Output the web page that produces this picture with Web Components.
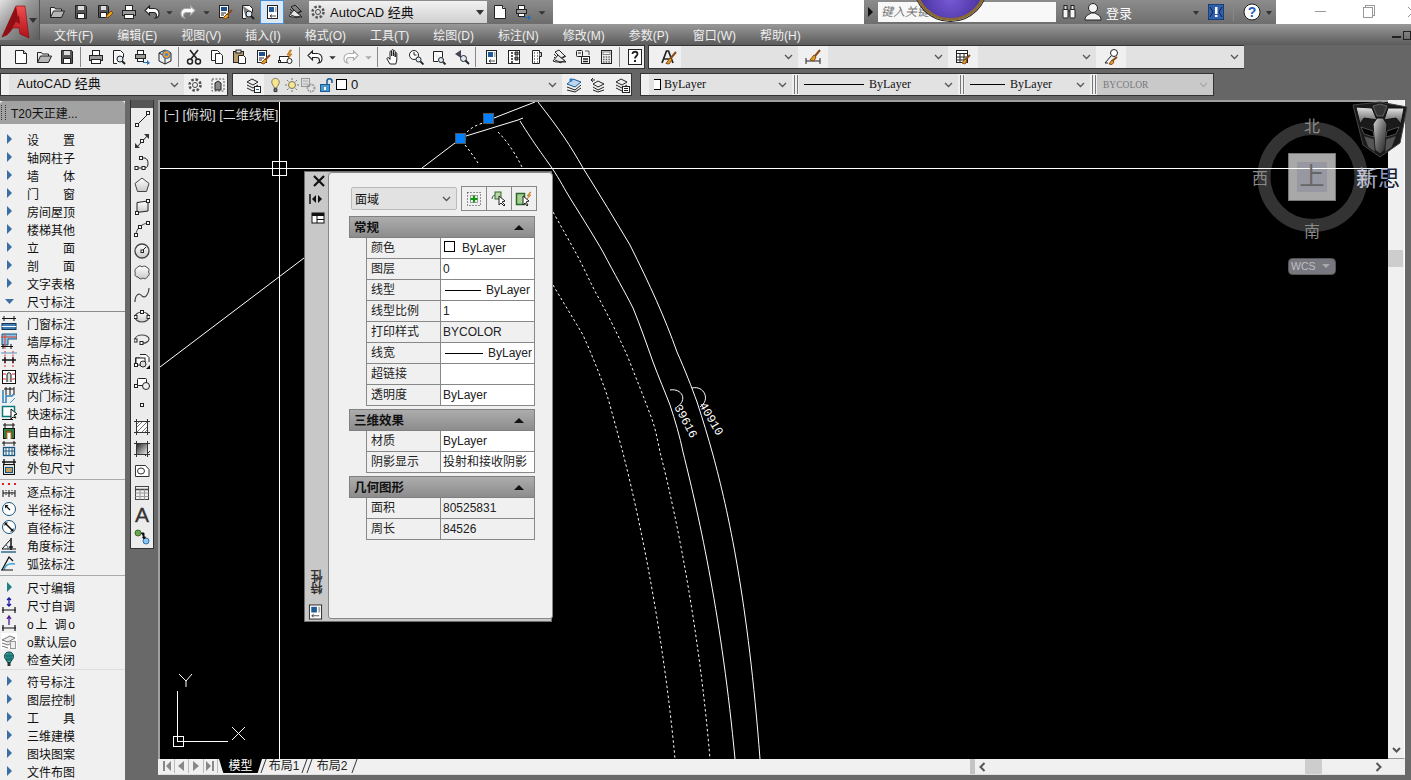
<!DOCTYPE html>
<html lang="zh">
<head>
<meta charset="utf-8">
<title>AutoCAD</title>
<style>
html, body { margin: 0; height: 100%; overflow: hidden; }
body {
    background: #696969;
    font: 12px "Liberation Sans", "Noto Sans CJK SC", sans-serif;
    color: #111;
    display: flex;
    flex-direction: column;
}
.serif { font: 12px "Liberation Serif", "Noto Sans CJK SC", serif; }
.line { display: inline-block; border-top: 1px solid #000; vertical-align: middle; }
.swatch { display: inline-block; width: 9px; height: 9px; border: 1px solid #000; background: #fff; }
</style>
</head>
<body>

<cad-titlebar></cad-titlebar>
<cad-menubar></cad-menubar>

<cad-toolrow style="height:28px">
    <cad-toolbar style="width:645px">
        <cad-icon name="new"></cad-icon><cad-icon name="open"></cad-icon><cad-icon name="save"></cad-icon><cad-sep></cad-sep>
        <cad-icon name="print"></cad-icon><cad-icon name="preview"></cad-icon><cad-icon name="publish"></cad-icon><cad-icon name="dwf"></cad-icon><cad-sep></cad-sep>
        <cad-icon name="cut"></cad-icon><cad-icon name="copy"></cad-icon><cad-icon name="paste"></cad-icon><cad-icon name="match"></cad-icon><cad-icon name="bblock"></cad-icon><cad-sep></cad-sep>
        <cad-icon name="undo"></cad-icon><cad-icon name="caret" w="13"></cad-icon><cad-icon name="redo"></cad-icon><cad-icon name="caretg" w="13"></cad-icon><cad-sep></cad-sep>
        <cad-icon name="pan"></cad-icon><cad-icon name="zoomrt"></cad-icon><cad-icon name="zoomwin"></cad-icon><cad-icon name="zoomprev"></cad-icon><cad-sep></cad-sep>
        <cad-icon name="props"></cad-icon><cad-icon name="center"></cad-icon><cad-icon name="tools"></cad-icon><cad-icon name="sheets"></cad-icon><cad-icon name="markup"></cad-icon><cad-icon name="calc"></cad-icon><cad-sep></cad-sep>
        <cad-icon name="help"></cad-icon>
    </cad-toolbar>
    <cad-toolbar style="width:596px;margin-left:3px">
        <cad-icon name="textstyle" w="24"></cad-icon><cad-combo style="width:117px"></cad-combo>
        <cad-icon name="dimstyle" w="30"></cad-icon><cad-combo style="width:120px"></cad-combo>
        <cad-icon name="tablestyle" w="30"></cad-icon><cad-combo style="width:118px"></cad-combo>
        <cad-icon name="mleader" w="30"></cad-icon><cad-combo style="width:118px"></cad-combo>
    </cad-toolbar>
</cad-toolrow>

<cad-toolrow style="height:27px">
    <cad-toolbar style="width:228px">
        <cad-combo style="width:175px;font-size:13px"><span style="margin-left:3px;line-height:19px;margin-top:-2px">AutoCAD 经典</span></cad-combo>
        <cad-icon name="gear" w="22"></cad-icon><cad-icon name="hatchbox" w="23"></cad-icon>
    </cad-toolbar>
    <cad-toolbar style="width:400px;margin-left:4px">
        <cad-icon name="layers" w="23"></cad-icon>
        <cad-combo style="width:298px">
            <cad-icon name="bulb" w="15" style="margin-left:-1px"></cad-icon><cad-icon name="sun" w="17"></cad-icon><cad-icon name="freeze" w="16"></cad-icon><cad-icon name="lock" w="19"></cad-icon><span class="swatch" style="margin:0 4px 0 1px"></span><span style="font-size:13px">0</span>
        </cad-combo>
        <cad-icon name="layerstate" w="24"></cad-icon><cad-icon name="layerprev" w="24"></cad-icon><cad-icon name="layerset" w="23"></cad-icon>
    </cad-toolbar>
    <cad-toolbar style="width:574px;margin-left:8px">
        <cad-combo style="width:143px"><span class="swatch" style="margin:0 3px 0 -4px"></span><span class="serif">ByLayer</span></cad-combo>
        <cad-grip></cad-grip>
        <cad-combo style="width:159px"><span class="line" style="width:60px;margin-right:5px"></span><span class="serif">ByLayer</span></cad-combo>
        <cad-grip></cad-grip>
        <cad-combo style="width:125px"><span class="line" style="width:35px;margin-right:5px"></span><span class="serif">ByLayer</span></cad-combo>
        <cad-grip></cad-grip>
        <cad-combo style="width:116px;background:#c9c9c9" disabled><span class="serif" style="color:#777;font-size:9.5px;margin-left:1px">BYCOLOR</span></cad-combo>
    </cad-toolbar>
</cad-toolrow>

<cad-main>
    <t20-panel>
        <t20-group rule="#8c8c8c">
            <t20-item arrow label="设 置"></t20-item>
            <t20-item arrow label="轴网柱子"></t20-item>
            <t20-item arrow label="墙 体"></t20-item>
            <t20-item arrow label="门 窗"></t20-item>
            <t20-item arrow label="房间屋顶"></t20-item>
            <t20-item arrow label="楼梯其他"></t20-item>
            <t20-item arrow label="立 面"></t20-item>
            <t20-item arrow label="剖 面"></t20-item>
            <t20-item arrow label="文字表格"></t20-item>
            <t20-item arrow="down" label="尺寸标注"></t20-item>
        </t20-group>
        <t20-group rule="#aaa" wide>
            <t20-item icon="t_door" label="门窗标注"></t20-item>
            <t20-item icon="t_wall" label="墙厚标注"></t20-item>
            <t20-item icon="t_two" label="两点标注"></t20-item>
            <t20-item icon="t_double" label="双线标注"></t20-item>
            <t20-item icon="t_inner" label="内门标注"></t20-item>
            <t20-item icon="t_quick" label="快速标注"></t20-item>
            <t20-item icon="t_free" label="自由标注"></t20-item>
            <t20-item icon="t_stair" label="楼梯标注"></t20-item>
            <t20-item icon="t_outer" label="外包尺寸"></t20-item>
        </t20-group>
        <t20-group rule="#aaa" wide>
            <t20-item icon="t_point" label="逐点标注"></t20-item>
            <t20-item icon="t_radius" label="半径标注"></t20-item>
            <t20-item icon="t_diam" label="直径标注"></t20-item>
            <t20-item icon="t_angle" label="角度标注"></t20-item>
            <t20-item icon="t_arc" label="弧弦标注"></t20-item>
        </t20-group>
        <t20-group rule="#ddd">
            <t20-item arrow="teal" label="尺寸编辑"></t20-item>
            <t20-item icon="t_adj" label="尺寸自调"></t20-item>
            <t20-item icon="t_up" label="o上 调o"></t20-item>
            <t20-item icon="t_layer" label="o默认层o"></t20-item>
            <t20-item icon="t_check" label="检查关闭"></t20-item>
        </t20-group>
        <t20-group>
            <t20-item arrow label="符号标注"></t20-item>
            <t20-item arrow label="图层控制"></t20-item>
            <t20-item arrow label="工 具"></t20-item>
            <t20-item arrow label="三维建模"></t20-item>
            <t20-item arrow label="图块图案"></t20-item>
            <t20-item arrow label="文件布图"></t20-item>
        </t20-group>
    </t20-panel>

    <draw-toolbar></draw-toolbar>

    <cad-viewport>
        <view-cube></view-cube>
        <prop-palette>
            <prop-section title="常规">
                <prop-row label="颜色"><span class="swatch" style="margin:0 7px 0 1px"></span>ByLayer</prop-row>
                <prop-row label="图层">0</prop-row>
                <prop-row label="线型"><span class="line" style="width:36px;margin:0 5px 0 2px"></span>ByLayer</prop-row>
                <prop-row label="线型比例">1</prop-row>
                <prop-row label="打印样式" readonly>BYCOLOR</prop-row>
                <prop-row label="线宽"><span class="line" style="width:38px;margin:0 5px 0 2px"></span>ByLayer</prop-row>
                <prop-row label="超链接"></prop-row>
                <prop-row label="透明度">ByLayer</prop-row>
            </prop-section>
            <prop-section title="三维效果">
                <prop-row label="材质">ByLayer</prop-row>
                <prop-row label="阴影显示">投射和接收阴影</prop-row>
            </prop-section>
            <prop-section title="几何图形">
                <prop-row label="面积" readonly>80525831</prop-row>
                <prop-row label="周长" readonly>84526</prop-row>
            </prop-section>
        </prop-palette>
    </cad-viewport>
</cad-main>

<script>
const BRUSH = 'stroke="#8a4a18"';
const ICONS = {
    new: '<path d="M2.5 1.5h8l3 3v10h-11z" fill="#fff"/><path d="M10.5 1.5v3h3" fill="#ccc"/>',
    open: '<path d="M1.5 13.5v-10h4l1 1.5h6v2" fill="#eee"/><path d="M1.5 13.5l3-6.5h11l-3 6.5z" fill="#b5b5b5"/>',
    save: '<path d="M2.5 1.5h10l1 1v12h-11z" fill="#555"/><rect x="5" y="2" width="6" height="4" fill="#ddd" stroke="none"/><rect x="4.5" y="9.5" width="7" height="5" fill="#fff"/>',
    saveas: '<path d="M1.5 1.5h9l1 1v11h-10z" fill="#555"/><rect x="4" y="2" width="5" height="4" fill="#ddd" stroke="none"/><rect x="3.5" y="8.5" width="6" height="5" fill="#fff"/><path d="M9 14l1-3 4-4 2 2-4 4z" fill="#e8a020" stroke="#7a4a10"/>',
    print: '<rect x="4.5" y="1.5" width="7" height="5" fill="#fff"/><rect x="1.5" y="6.5" width="13" height="5" fill="#999"/><rect x="3.5" y="10.5" width="9" height="4" fill="#fff"/>',
    preview: '<path d="M2.5 1.5h7l3 3v4M6 14.5H2.5v-13" fill="#fff"/><circle cx="9" cy="10" r="3" fill="#dfeaf5"/><path d="M11 12l3 3" stroke-width="2"/>',
    publish: '<rect x="3.5" y="1.5" width="6" height="4" fill="#fff"/><rect x="1.5" y="5.5" width="10" height="4" fill="#999"/><rect x="3.5" y="9.5" width="6" height="3" fill="#fff"/><path d="M9 13h4v-2l3 3-3 2v-2H9z" fill="#1c70c0" stroke="none"/>',
    dwf: '<path d="M8 1l6 3v8l-6 3-6-3V4z" fill="#eee"/><path d="M2 4l6 3 6-3M8 7v8"/><circle cx="9.5" cy="5.5" r="4" fill="#f29a2e" stroke="#1c70c0"/><circle cx="9.5" cy="5.5" r="1.6" fill="#3a8ad0" stroke="none"/>',
    cut: '<path d="M4 1l7 9M12 1l-7 9" stroke-width="1.6"/><circle cx="4" cy="12.5" r="2.5" stroke-width="1.5"/><circle cx="12" cy="12.5" r="2.5" stroke-width="1.5"/>',
    copy: '<path d="M2.5 1.5h6l2 2v8h-8z" fill="#fff"/><path d="M6.5 4.5h5l2 2v8h-7z" fill="#fff"/>',
    paste: '<rect x="1.5" y="2.5" width="10" height="11" fill="#b89b6a"/><rect x="4" y="1" width="5" height="3" fill="#ddd"/><path d="M6.5 6.5h5l2 2v6h-7z" fill="#fff"/>',
    match: `<rect x="2.5" y="1.5" width="9" height="12" fill="#fff"/><rect x="4" y="3" width="6" height="4" fill="#1f4f8f" stroke="none"/><path d="M4 9h5M4 11h3"/><path d="M15 6l-5 5" ${BRUSH} stroke-width="2"/><path d="M10 10l2 2-3 3-3-1z" fill="#e0a020" ${BRUSH}/>`,
    bblock: '<rect x="1.5" y="7.5" width="9" height="6" fill="#fff"/><circle cx="11.5" cy="12" r="2.5" fill="#fff"/><rect x=".5" y="11.5" width="2" height="2" fill="#fff"/><path d="M12 1l-3 5h2.500l-1.500 4 4-5h-2.500l2-4z" fill="#f09a20" stroke="#a05a10" stroke-width=".6"/>',
    undo: '<path d="M5.5 2L1 6.500 5.500 11V8.500h4c2.500 0 3 1.500 3 3 0 1-.5 2-1 2.500 2.500-.5 3.500-2.500 3.500-4.500 0-3-2-5-5-5h-4.500z" fill="#fff" stroke-width="1.1"/>',
    redo: '<path d="M10.5 2L15 6.500 10.500 11V8.500h-4c-2.500 0-3 1.500-3 3 0 1 .5 2 1 2.500C2 13.500 1 11.500 1 9.500c0-3 2-5 5-5h4.500z" fill="#fff" stroke="#aaa" stroke-width="1.1"/>',
    caret: '<path d="M4 7h8l-4 4z" fill="#333" stroke="none"/>',
    caretg: '<path d="M4 7h8l-4 4z" fill="#aaa" stroke="none"/>',
    pan: '<path d="M5 15l-3-5c-.5-1 1-2 2-1l1 1.500V3c0-1.300 1.700-1.300 1.700 0v4-5.500c0-1.300 1.800-1.300 1.800 0V7V2.500c0-1.300 1.700-1.300 1.700 0V8V4.500c0-1.200 1.600-1.200 1.600 0V11l-1 4z" fill="#fff"/>',
    zoomrt: '<circle cx="6" cy="6" r="4.5" fill="#fff"/><path d="M6 3v3h2.500"/><circle cx="10.5" cy="10.5" r="2.500" fill="#dfeaf5"/><path d="M12.5 12.500l3 3" stroke-width="1.8"/>',
    zoomwin: '<path d="M2.5 2.500h9v6M7 12.500H2.500v-10" fill="#fff"/><circle cx="10" cy="11" r="2.5" fill="#dfeaf5"/><path d="M12 13l2.500 2.500" stroke-width="1.8"/>',
    zoomprev: '<path d="M7 1l-6 4 6 4z" fill="#445" stroke="none"/><circle cx="9.5" cy="9.5" r="3" fill="#dfeaf5"/><path d="M11.5 11.500l3.500 3.500" stroke-width="1.8"/>',
    props: '<rect x="3.5" y="1.5" width="10" height="13" fill="#fff"/><rect x="5" y="3" width="5" height="5" fill="#1f5a9a" stroke="none"/><rect x="11" y="3" width="1.5" height="5" fill="#aaa" stroke="none"/><path d="M6 12h6M6 12l2-1.500M6 12l2 1.500" stroke-width=".8"/>',
    center: '<rect x="2.5" y="1.5" width="11" height="13" fill="#fff"/><path d="M5 4h2M5 7h2M5 10h2M5 13h2" stroke-width="1.5"/><path d="M9 3h3v3H9zM9 8h3v3H9z" fill="#778"/>',
    tools: '<path d="M3.5 1.500h7v13h-7z" fill="#fff"/><path d="M10.5 3.500h2v4h-2" fill="#ccc"/><path d="M5 4h1M8 4h1M5 7h1M8 7h1M5 10h1M8 10h1M5 13h1M8 13h1" stroke-width="1.5" stroke="#666"/>',
    sheets: '<path d="M7 1l6 6-4 2-6-6zM2 5l6 6M2 8l6 6 5-3M6 12l8-5"/><path d="M1 12l5-6 8 7H4z" fill="#e8e8e8"/><path d="M3 11l5 2 5-1" stroke="#333"/>',
    markup: '<rect x="1.5" y="1.5" width="6" height="6" rx="1" fill="#eee"/><path d="M3 4h3"/><rect x="6.5" y="7.5" width="8" height="7" fill="#fff"/><path d="M8 10h5M8 12.500h5" stroke-width="1.5"/><path d="M10 2h4v4" stroke="#555"/>',
    calc: '<rect x="3.5" y="1.5" width="10" height="13" fill="#eee"/><rect x="5" y="3" width="7" height="2.5" fill="#fff" stroke="#555" stroke-width=".7"/><path d="M5 8h7M5 10.500h7M5 13h7" stroke="#666" stroke-dasharray="1.5 1.2" stroke-width="1.4"/>',
    help: '<rect x="1.5" y=".5" width="13" height="15" fill="#fff"/><path d="M5.5 5c0-3 5-3 5 0 0 2-2.500 2-2.500 4.500" stroke-width="1.8"/><rect x="7" y="11" width="2" height="2" fill="#222" stroke="none"/>',
    textstyle: `<path d="M1 14L5.500 2h2L12 14M3 10h7" stroke-width="1.7"/><path d="M15 3L9 10" ${BRUSH} stroke-width="2"/><path d="M9 9l2 2-3 4-3-.5z" fill="#e0a020" ${BRUSH}/>`,
    dimstyle: `<path d="M1 9v6M15 9v6M1 12h14"/><path d="M15 1l-5 6" ${BRUSH} stroke-width="2"/><path d="M9 6l2 2-2 4-4-1z" fill="#e0a020" ${BRUSH}/>`,
    tablestyle: `<rect x="1.5" y="1.5" width="11" height="12" fill="#fff"/><path d="M1.500 4.500h11M1.500 8h11M1.500 11h11M5 4.500v9M9 4.500v9"/><path d="M15 6l-5 5" ${BRUSH} stroke-width="2"/><path d="M10 10l2 2-2 3-3-1z" fill="#e0a020" ${BRUSH}/>`,
    mleader: `<circle cx="11" cy="4" r="3.5" fill="#fff"/><path d="M8 7l-6 7h3"/><path d="M14 8l-5 4" ${BRUSH} stroke-width="2"/><path d="M9 11l2 2-2 2.500-3-.5z" fill="#e0a020" ${BRUSH}/>`,
    gear: '<circle cx="8" cy="8" r="5.5" stroke-dasharray="2.5 1.8" stroke-width="2.5" stroke="#555"/><circle cx="8" cy="8" r="2.5" stroke="#444"/>',
    hatchbox: '<path d="M2 2h12v12H2z" stroke="#555" stroke-dasharray="2 1.5"/><path d="M5 13V6l3-2 3 2v7z" fill="#888"/>',
    layers: '<path d="M2 5l5-3 6 3-5 3z" fill="#eee"/><path d="M2 8l6 3 5-3M2 11l6 3 2-1"/><rect x="9.5" y="9.5" width="6" height="6" fill="#fff"/><path d="M11 12.500h3" stroke="#1f5a9a"/>',
    bulb: '<path d="M8 1C5 1 4 3 4 5c0 2.500 2.500 4 2.500 6h3C9.500 9 12 7.500 12 5c0-2-1-4-4-4z" fill="#f7e68a" stroke="#776"/><path d="M6.500 12h3v3h-3z" fill="#888"/>',
    sun: '<circle cx="8" cy="8" r="3.5" fill="#f7e68a" stroke="#776"/><path d="M8 1v2M8 13v2M1 8h2M13 8h2M3 3l1.500 1.500M13 3l-1.500 1.500M3 13l1.500-1.500M13 13l-1.500-1.500" stroke="#776"/>',
    freeze: '<rect x="1.5" y="1.5" width="8" height="8" fill="#ddd" stroke="#999"/><path d="M3 4h5M3 7h5" stroke="#aaa"/><circle cx="11" cy="11" r="3.5" stroke="#999" stroke-dasharray="1.5 1" stroke-width="2"/>',
    lock: '<rect x="2.5" y="7.5" width="9" height="7" fill="#4a9ad0" stroke="#1c5a90"/><path d="M9 7V4c0-3 5-3 5 0v2" stroke="#1c5a90" stroke-width="1.5"/><rect x="6" y="10" width="2" height="3" fill="#fff" stroke="none"/>',
    layerstate: '<path d="M1 7l6-5 8 3-6 5z" fill="#bcd6f0" stroke="#1c5a90"/><path d="M1 10l8 3 6-5M1 13l8 2 6-4"/><circle cx="5" cy="3" r="1.7" fill="#2a80d0" stroke="none"/>',
    layerprev: '<path d="M3 7l5-3 6 3-6 3zM3 10l5 3 6-3M3 13l5 2 6-2"/><path d="M5 3H1l2-2M1 3l2 2" stroke="#223"/>',
    layerset: '<path d="M2 5l5-3 6 3-5 3z" fill="#eee"/><path d="M2 8l6 3 5-3M2 11l6 3"/><rect x="8.5" y="9.5" width="7" height="6" fill="#fff"/><path d="M10 11.500h4M10 13.500h4"/>',
    bino: '<rect x="2" y="5" width="5" height="9" rx="1" fill="#f4f4f4"/><rect x="9" y="5" width="5" height="9" rx="1" fill="#f4f4f4"/><rect x="3" y="1.5" width="3" height="4" fill="#ddd"/><rect x="10" y="1.5" width="3" height="4" fill="#ddd"/><path d="M7 7h2"/>',
    line: '<path d="M3 14L14 3"/><rect x="1.5" y="12.5" width="3" height="3" fill="#fff"/><rect x="12.5" y=".5" width="3" height="3" fill="#fff"/>',
    xline: '<path d="M2 15L15 1"/><path d="M1 15h5l-5-5zM15 1h-5l5 5z" fill="#333" stroke="none"/><rect x="6.5" y="6.5" width="3" height="3" fill="#fff"/>',
    pline: '<path d="M3 13h8c4 0 4-9 0-10H8"/><rect x="1" y="11.5" width="3" height="3" fill="#fff"/><rect x="8" y="11.5" width="3" height="3" fill="#fff"/><rect x="5.5" y="1.5" width="3" height="3" fill="#fff"/>',
    polygon: '<path d="M8 1l7 5.500-2.500 8h-9L1 6.500z" fill="url(#soft)" stroke="#444"/>',
    rect: '<path d="M3 3.500L14 2v10l-11 1.500z" fill="url(#soft)"/><rect x="1.5" y="12.5" width="3" height="3" fill="#fff"/><rect x="12.5" y=".5" width="3" height="3" fill="#fff"/>',
    arc: '<path d="M2 14C2 8 7 3 14 2" stroke="#444"/><rect x=".5" y="12.5" width="3" height="3" fill="#fff"/><rect x="12.5" y=".5" width="3" height="3" fill="#fff"/><rect x="4.5" y="4.5" width="3" height="3" fill="#fff"/>',
    circle: '<circle cx="8" cy="8" r="7" fill="url(#soft)" stroke="#444" stroke-width="1.3"/><path d="M8 8l4-4"/><rect x="7" y="7" width="2.5" height="2.5" fill="#fff"/>',
    cloud: '<path d="M4 2c1-1.500 3-1.500 4 0 1.500-1.500 4-1 5 .5 2 .5 2.500 3 1.500 4.500 1.500 1.500.5 4-1 4.500-.5 2-3 3-4.500 1.500-1.500 1.500-4 1-5-1C1 12 .5 9.500 1.500 8 0 6 1.500 3 4 2z" fill="url(#soft)" stroke="#444"/>',
    spline: '<path d="M1 15C1 8 5 5 8 9c3 3 7-2 7-8" stroke="#444" stroke-width="1.2"/>',
    ellipse: '<ellipse cx="8" cy="8" rx="7" ry="5" fill="url(#soft)" stroke="#444" stroke-width="1.2"/><rect y="6.5" width="3" height="3" fill="#fff"/><rect x="13" y="6.5" width="3" height="3" fill="#fff"/><rect x="6.5" y="1.5" width="3" height="3" fill="#fff"/>',
    ellarc: '<path d="M1 9c0-3 3-5 7-5s7 2 7 4-3 5-8 4" stroke="#444" stroke-width="1.2"/><rect y="8" width="3" height="3" fill="#fff"/><rect x="6" y="10.5" width="3" height="3" fill="#fff"/>',
    insert: '<path d="M6 1.500h6l3 3V9" fill="#fff"/><path d="M6 5H1.500v6" fill="#fff"/><rect x="2" y="5" width="9" height="7" fill="#fff"/><circle cx="9" cy="11" r="3" fill="#ddd"/><rect x=".5" y="10.5" width="3" height="3" fill="#fff"/><path d="M16 12v4h-4z" fill="#111" stroke="none"/>',
    mkblock: '<rect x="3.5" y="3.5" width="9" height="7" rx="1" fill="#fff"/><circle cx="12" cy="11" r="3.5" fill="#eee"/><rect x=".5" y="9.5" width="3" height="3" fill="#fff"/>',
    point: '<rect x="6.5" y="6.5" width="3" height="3" fill="#fff"/>',
    hatch: '<rect x="2.5" y="2.5" width="11" height="11" fill="#fff"/><path d="M3 8l5-5M3 13L13 3M8 13l5-5M5 3l-3 3M13 11l-2 2" stroke="#777"/><path d="M0 2.500h16M0 13.500h16M2.500 0v16M13.500 0v16" stroke="#333"/>',
    gradient: '<rect x="2.5" y="2.5" width="11" height="11" fill="url(#ramp)"/><path d="M0 2.500h16M0 13.500h16M2.500 0v16M13.500 0v16" stroke="#333"/><path d="M11 15l5-5" stroke="#333"/>',
    region: '<path d="M1.500 2.500h10l3.500 4v7H1.500z" fill="#fff" stroke="#333"/><ellipse cx="7" cy="8" rx="3.5" ry="3" fill="#fff" stroke="#333"/>',
    table: '<rect x="1.5" y="1.5" width="13" height="13" fill="#eee" stroke="#444"/><path d="M1.500 4.500h13" stroke="#444" stroke-width="1.5"/><path d="M1.500 8h13M1.500 11.500h13M6 4.500v10M10.500 4.500v10" stroke="#999"/>',
    addsel: '<circle cx="4" cy="4" r="3" fill="#6aa84f" stroke="#3a6a2a"/><circle cx="12" cy="12" r="3" fill="#8cc4f0" stroke="#2a70b0"/><path d="M7 4h3v5M8.500 8h3l-1.500 2z" fill="#111" stroke="#111"/>',
    t_door: '<path d="M1 3.500h14M3 1v5M13 1v5" stroke="#111"/><rect x="1" y="8.5" width="14" height="6" fill="#3b7fb5" stroke="#16324f"/><path d="M1 11.500h14" stroke="#fff"/>',
    t_wall: '<path d="M1 1h15v5H7v6H1z" fill="#8cc0e8" stroke="#16567f"/><path d="M4 1v15M0 4h16" stroke="#e04020"/><path d="M0 13.500h12M2 11v5M10 11v5" stroke="#111"/>',
    t_two: '<path d="M4 0v16M12 0v16" stroke="#e02020" stroke-dasharray="2 1.5"/><path d="M1 9h14M4 6v6M12 6v6" stroke="#111" stroke-width="1.3"/><path d="M0 2h16" stroke="#6090c0"/>',
    t_double: '<rect x="1.5" y="1.5" width="13" height="13" fill="#fff" stroke="#111"/><path d="M6 13V6c0-3 4-3 4 0v7" stroke="#111" fill="#ddd"/><path d="M2 5h3M11 5h3M2 10h3M11 10h3" stroke="#e02020"/>',
    t_inner: '<path d="M3 2h10M5 0v8M9 0v8M13 0v8" stroke="#111"/><path d="M2 3v13h3V9h6l2-2" stroke="#2a80b8" stroke-width="1.5"/><path d="M9 16l5-5" stroke="#3aa0d0"/>',
    t_quick: '<rect x="1.5" y="1.5" width="12" height="10" fill="#fff" stroke="#0a7a7a" stroke-width="1.5"/><path d="M1 14.500h11" stroke="#111"/><path d="M10 4v10l2-2 3 1-2-3 3-1z" fill="#fff" stroke="#111"/>',
    t_free: '<path d="M2 2h12M4 0v5M12 0v5" stroke="#111"/><rect x="2.5" y="5.5" width="11" height="10" fill="#2a8a4a" stroke="#111"/><rect x="5" y="8" width="6" height="8" fill="#b08040" stroke="#6a4a10"/><rect x="6.5" y="10" width="3" height="6" fill="#fff" stroke="none"/>',
    t_stair: '<path d="M1 2h14M3 0v5M13 0v5" stroke="#111"/><rect x="2.5" y="6.5" width="11" height="8" fill="#fff" stroke="#16567f" stroke-width="1.3"/><path d="M5 7v8M8 7v8M11 7v8M3 10h10" stroke="#16567f"/>',
    t_outer: '<path d="M1 3h14M3 0v6M13 0v6" stroke="#111" stroke-width="1.3"/><rect x="2.5" y="5.5" width="11" height="10" fill="#dcdcdc" stroke="#111"/><rect x="4.5" y="8.5" width="7" height="5" fill="#c0a060" stroke="#16567f"/>',
    t_point: '<path d="M2 10h12M2 7v7M8 7v7M14 7v7" stroke="#111"/><path d="M5 7v6M11 7v6" stroke="#111" stroke-dasharray="1 1"/><path d="M1 1h2M7 1h2M13 1h2" stroke="#e02020" stroke-width="2"/>',
    t_radius: '<circle cx="8" cy="8" r="6.5" fill="#fff" stroke="#16567f"/><path d="M5 5l4 4" stroke="#111" stroke-width="1.3"/><path d="M4 4h3.500L4 7.500z" fill="#111" stroke="none"/>',
    t_diam: '<circle cx="8" cy="8" r="6.5" fill="#fff" stroke="#16567f"/><path d="M4.500 4.500l7 7" stroke="#111" stroke-width="1.5"/><path d="M3.500 3.500H7L3.500 7zM12.500 12.500H9l3.500-3.500z" fill="#111" stroke="none"/>',
    t_angle: '<path d="M1 12L9 3M1 12h14" stroke="#111"/><path d="M0 15h15" stroke="#16567f" stroke-width="1.3"/><path d="M5 8c2 1 2 2 2 4" stroke="#16567f"/><path d="M10 1v12M8 10h4" stroke="#111" stroke-width="1.5"/>',
    t_arc: '<path d="M1 15L8 2l4 4" stroke="#111" stroke-width="1.3"/><path d="M3 15c1-5 5-7 11-6" stroke="#3aa0d0" stroke-width="1.3"/><path d="M0 15h12" stroke="#111"/>',
    t_adj: '<path d="M8 1v8M6 3l2-2 2 2M6 7l2 2 2-2" stroke="#1a1aa0" stroke-width="1.3"/><path d="M1 13h14M2 10v6M14 10v6" stroke="#111" stroke-width="1.2"/>',
    t_up: '<path d="M8 1v9M6 4l2-3 2 3" stroke="#4a1a90" stroke-width="1.3"/><path d="M1 13h14M2 10v6M14 10v6" stroke="#111" stroke-width="1.2"/>',
    t_layer: '<rect width="16" height="16" fill="#fff" stroke="none"/><path d="M1 7l8-4 5 2-7 4zM1 10l6 2 7-4M1 13l6 2" stroke="#777" fill="#eee"/><rect x="9.5" y="8.5" width="5" height="7" fill="#eee" stroke="#999"/>',
    t_check: '<path d="M8 1C5 1 3.500 3 3.500 5.500c0 2.500 2.500 4 3 6h3c.5-2 3-3.500 3-6C12.500 3 11 1 8 1z" fill="#3aa8a0" stroke="#103a40"/><path d="M6 3v7M8 2v8M10 3v7M4 5h8M5 8h6" stroke="#0a4a50" stroke-width=".7"/><rect x="6.5" y="12" width="3" height="3" fill="#333" stroke="none"/>'
};

const DEFS = '<defs><linearGradient id="soft" x1="0" y1="0" x2="0" y2="1"><stop offset="0" stop-color="#fff"/><stop offset="1" stop-color="#c9c9c9"/></linearGradient><linearGradient id="ramp" x1="0" y1="0" x2="1" y2="1"><stop offset="0" stop-color="#222"/><stop offset="1" stop-color="#eee"/></linearGradient></defs>';

function iconSvg(name) {
    return `<svg viewBox="0 0 16 16" width="16" height="16" fill="none" stroke="#222">${DEFS}${ICONS[name] || ''}</svg>`;
}

// base class: subclasses give css() and template(), render happens once on connect
class ShadowElement extends HTMLElement {
    constructor() {
        super();
        this.attachShadow({ mode: 'open' });
    }
    connectedCallback() {
        this.shadowRoot.innerHTML = `<style>${this.css()}</style>${this.template()}`;
    }
    css() { return ''; }
    template() { return '<slot></slot>'; }
}

class CadIcon extends ShadowElement {
    css() {
        return `:host { display: inline-flex; align-items: center; justify-content: center; width: ${this.getAttribute('w') || 23}px; height: 22px; flex: none; }
                svg { display: block; }`;
    }
    template() { return iconSvg(this.getAttribute('name')); }
}

class CadSep extends ShadowElement {
    css() {
        return `:host { display: block; width: 6px; flex: none; position: relative; }
                :host::after { content: ''; position: absolute; left: 2px; top: 1px; bottom: 1px; border-left: 1px solid #888; }`;
    }
    template() { return ''; }
}

class CadGrip extends ShadowElement {
    css() {
        return `:host { display: block; width: 7px; flex: none; position: relative; background: #f0f0f0; }
                :host::after { content: ''; position: absolute; left: 2px; top: 1px; bottom: 1px; width: 2px; border-left: 1px solid #777; border-right: 1px solid #777; }`;
    }
    template() { return ''; }
}

class CadCombo extends ShadowElement {
    css() {
        const chevron = this.hasAttribute('disabled') ? '#aaa' : '#555';
        return `:host { display: flex; align-items: center; box-sizing: border-box; background: #e2e2e2; flex: none; padding-left: 5px; }
                .box { flex: 1; display: flex; align-items: center; white-space: nowrap; overflow: hidden; height: 100%; }
                svg { flex: none; margin: 0 5px; }
                .chev { stroke: ${chevron}; }`;
    }
    template() {
        return `<div class="box"><slot></slot></div><svg width="9" height="6" viewBox="0 0 9 6" fill="none"><path class="chev" d="M1 1l3.500 3.500L8 1" stroke-width="1.3"/></svg>`;
    }
}

class CadToolbar extends ShadowElement {
    css() {
        return `:host { display: flex; box-sizing: border-box; height: 100%; background: #f0f0f0; border: 1px solid #333; flex: none; }
                .grip { width: 7px; flex: none; background-image: radial-gradient(#555 40%, transparent 45%); background-size: 2px 2px; margin: 1px 0 1px 1px; background-clip: content-box; padding: 0 1px 0 2px; box-sizing: border-box; }
                .row { flex: 1; display: flex; align-items: stretch; min-width: 0; }
                ::slotted(cad-icon) { height: 100%; }`;
    }
    template() { return `<div class="grip"></div><div class="row"><slot></slot></div>`; }
}

class CadToolrow extends ShadowElement {
    css() {
        return `:host { display: flex; box-sizing: border-box; padding-bottom: 4px; flex: none; background: #666; }`;
    }
}

class CadTitlebar extends ShadowElement {
    css() {
        return `:host { display: flex; height: 24px; flex: none; background: #fff; position: relative; font-size: 12px; }
                .app { position: absolute; left: 0; top: 0; width: 39px; height: 40px; z-index: 3; background: linear-gradient(135deg, #e2e2e2, #9a9a9a 40%, #5c5c5c); border-right: 1px solid #555; }
                .app svg { display: block; }
                .qat { display: flex; align-items: center; margin-left: 40px; width: 513px; flex: none; padding-left: 5px; box-sizing: border-box; background: linear-gradient(#8c8c8c, #6c6c6c); }
                .qat cad-icon { height: 24px; }
                .active { outline: 1px solid #4a90d8; background: #dbe9f7; outline-offset: -1px; }
                .qcombo { display: flex; align-items: center; width: 178px; height: 22px; margin: 0 2px 0 2px; background: linear-gradient(#f2f2f2, #cfcfcf); font-size: 13px; flex: none; position: relative; }
                .qcombo span { margin-left: 3px; margin-top: -1px; }
                .qcombo i { position: absolute; right: 3px; top: 9px; border: 4px solid transparent; border-top: 5px solid #333; }
                .white { width: 311px; flex: none; }
                .search { width: 412px; flex: none; display: flex; align-items: center; background: linear-gradient(#8c8c8c, #6e6e6e); position: relative; overflow: hidden; color: #fff; }
                .play { width: 0; height: 0; border: 5px solid transparent; border-left: 5px solid #111; margin-left: 4px; flex: none; }
                .input { width: 178px; height: 20px; background: #f8f8f8; color: #777; font-style: italic; line-height: 21px; margin-left: 0; padding-left: 3px; box-sizing: border-box; flex: none; }
                .orb { position: absolute; left: 50px; top: -52px; width: 73px; height: 73px; border-radius: 50%; box-sizing: border-box; border: 3px solid #8a6a30; background: radial-gradient(circle at 50% 70%, #7a5ad8, #43309a 60%, #241a5e); box-shadow: 0 0 0 1px #222; }
                .login { margin-left: 2px; font-size: 13px; width: 87px; flex: none; }
                .win { flex: 1; position: relative; }
                .min { position: absolute; left: 39px; top: 11px; width: 11px; border-top: 1px solid #999; }
                .rest { position: absolute; left: 87px; top: 7px; width: 8px; height: 9px; border: 1px solid #999; box-shadow: 2px -2px 0 -1px #fff, 2px -2px 0 0 #999; }
                .close { position: absolute; left: 131px; top: 6px; width: 12px; height: 12px; }
                .qcaret { width: 0; height: 0; border: 3px solid transparent; border-top: 4px solid #333; margin-top: 4px; flex: none; }`;
    }
    template() {
        return `
            <div class="app"><svg width="39" height="40" viewBox="0 0 39 40">
                <defs><linearGradient id="red" x1="0" y1="0" x2="0" y2="1"><stop offset="0" stop-color="#f05050"/><stop offset="1" stop-color="#b01018"/></linearGradient></defs>
                <path d="M2 37L16 6h9l4 32-9-4-1-6h-6l-6 7z" fill="url(#red)" stroke="#7a0c10" stroke-width=".6"/>
                <path d="M2 37L16 6l2 12-8 14z" fill="#8f0f14"/>
                <path d="M16 22l3-7 1 9z" fill="#8f0f14"/>
                <path d="M29 18h8l-4 5z" fill="#333"/>
            </svg></div>
            <div class="qat">
                <cad-icon name="open" w="24"></cad-icon><cad-icon name="save" w="24"></cad-icon><cad-icon name="saveas" w="24"></cad-icon><cad-icon name="print" w="23"></cad-icon><cad-icon name="undo" w="23"></cad-icon><cad-icon name="caret" w="13"></cad-icon><cad-icon name="redo" w="24"></cad-icon><cad-icon name="caret" w="13"></cad-icon><cad-icon name="match" w="23"></cad-icon><cad-icon name="preview" w="24"></cad-icon><cad-icon class="active" name="props" w="24"></cad-icon><cad-icon name="sheets" w="23"></cad-icon>
                <div class="qcombo"><cad-icon name="gear" w="18"></cad-icon><span>AutoCAD 经典</span><i></i></div>
                <cad-icon name="new" w="22"></cad-icon><cad-icon name="publish" w="24"></cad-icon><cad-icon name="caret" w="14"></cad-icon>
            </div>
            <div class="white"></div>
            <div class="search">
                <div class="play"></div>
                <div class="input">键入关键字</div>
                <div class="orb"></div>
                <cad-icon name="bino" w="26"></cad-icon>
                <svg width="22" height="20" viewBox="0 0 22 20"><circle cx="11" cy="6" r="4.5" fill="#f4f4f4" stroke="#222"/><path d="M3 18c0-5 4-5 6-7h4c2 2 6 2 6 7z" fill="#f4f4f4" stroke="#222"/></svg>
                <span class="login">登录</span>
                <div class="qcaret"></div>
                <svg width="16" height="16" viewBox="0 0 16 16" style="margin-left:9px;flex:none"><rect width="16" height="16" fill="#2f5fb0" stroke="#123"/><path d="M2 3l3 5-3 5M14 3l-3 5 3 5" stroke="#123" fill="none"/><rect x="7" y="3" width="2.5" height="7" fill="#fff"/><rect x="7" y="11" width="2.5" height="2" fill="#fff"/></svg>
                <div style="width:1px;height:17px;background:#888;margin-left:9px;flex:none"></div>
                <svg width="18" height="18" viewBox="0 0 18 18" style="margin-left:9px;flex:none"><circle cx="9" cy="9" r="8" fill="#fff" stroke="#222"/><text x="9" y="14" text-anchor="middle" font-size="14" font-weight="bold" fill="#2060c0" font-family="Liberation Sans">?</text></svg>
                <div class="qcaret" style="margin-left:5px"></div>
            </div>
            <div class="win">
                <div class="min"></div><div class="rest"></div>
                <svg class="close" viewBox="0 0 12 12"><path d="M1 1l10 10M11 1L1 11" stroke="#999" fill="none"/></svg>
            </div>`;
    }
}

class CadMenubar extends ShadowElement {
    css() {
        return `:host { display: flex; align-items: center; height: 21px; flex: none; padding-left: 54px; gap: 24px; box-sizing: border-box; background: linear-gradient(#999, #8a8a8a 25%, #5b5b5b); color: #eee; position: relative; font-size: 12px; }
                .m { position: absolute; right: 10px; top: 12px; width: 9px; border-top: 2px solid #222; }
                .r { position: absolute; right: 0; top: 7px; width: 6px; height: 7px; border: 1px solid #222; }`;
    }
    template() {
        const items = ['文件(F)', '编辑(E)', '视图(V)', '插入(I)', '格式(O)', '工具(T)', '绘图(D)', '标注(N)', '修改(M)', '参数(P)', '窗口(W)', '帮助(H)'];
        return items.map(t => `<span>${t}</span>`).join('') + '<div class="m"></div><div class="r"></div>';
    }
}

class CadMain extends ShadowElement {
    css() {
        return `:host { display: flex; flex: 1; min-height: 0; align-items: flex-start; background: #696969; }`;
    }
}

class T20Panel extends ShadowElement {
    css() {
        return `:host { display: block; width: 125px; margin-top: 1px; flex: none; height: 679px; overflow: hidden; background: #f0f0f0; }
                .head { height: 23px; display: flex; align-items: center; background: #a2a2a2; border-radius: 4px 4px 0 0; font-size: 12px; color: #111; }
                .grip { width: 3px; height: 15px; margin: 0 5px 0 1px; border-left: 1px dotted #333; border-right: 1px dotted #333; }
                .list { padding-top: 6px; }`;
    }
    template() {
        return `<div class="head"><div class="grip"></div>T20天正建...</div><div class="list"><slot></slot></div>`;
    }
}

class T20Group extends ShadowElement {
    css() {
        const rule = this.getAttribute('rule');
        const pad = this.hasAttribute('wide') ? 3 : 1;
        const line = rule ? `border-bottom: 1px solid ${rule}; padding-bottom: ${pad}px; margin-bottom: 2px;` : '';
        return `:host { display: block; ${line} }`;
    }
}

class T20Item extends ShadowElement {
    css() {
        return `:host { display: flex; align-items: center; height: 18px; font-size: 12px; color: #111; }
                .ic { width: 27px; display: flex; justify-content: center; padding-right: 7px; box-sizing: border-box; flex: none; }
                .lb { width: 48px; text-align-last: justify; white-space: nowrap; }
                svg { display: block; }`;
    }
    template() {
        const kind = this.getAttribute('arrow');
        let glyph;
        if (kind === 'down') {
            glyph = '<svg width="12" height="10" viewBox="0 0 12 10"><path d="M1 3h9L5.500 8z" fill="#3a6ea5"/></svg>';
        } else if (kind !== null) {
            const col = kind === 'teal' ? '#1d7f7f' : '#3a6ea5';
            glyph = `<svg width="8" height="10" viewBox="0 0 8 10"><path d="M1 0l5 5-5 5z" fill="${col}"/></svg>`;
        } else {
            glyph = iconSvg(this.getAttribute('icon'));
        }
        return `<div class="ic" ${kind === null ? 'style="padding-right:9px"' : ''}>${glyph}</div><div class="lb">${this.getAttribute('label')}</div>`;
    }
}

class DrawToolbar extends ShadowElement {
    css() {
        return `:host { display: flex; flex-direction: column; align-items: center; width: 24px; margin-left: 5px; height: 449px; box-sizing: border-box; background: #ececec; border: 1px solid #333; border-top: none; flex: none; }
                .head { align-self: stretch; height: 8px; flex: none; background: #555 radial-gradient(#ccc 40%, transparent 45%) 4px 2px / 2px 2px repeat-x; }
                .cell { height: 22px; display: flex; align-items: center; justify-content: center; flex: none; }
                .a { font: 21px "Liberation Sans", sans-serif; color: #333; -webkit-text-stroke: .3px #333; }
                svg { display: block; }`;
    }
    template() {
        const names = ['line', 'xline', 'pline', 'polygon', 'rect', 'arc', 'circle', 'cloud', 'spline', 'ellipse', 'ellarc', 'insert', 'mkblock', 'point', 'hatch', 'gradient', 'region', 'table', 'A', 'addsel'];
        const cells = names.map(n => `<div class="cell">${n === 'A' ? '<span class="a">A</span>' : iconSvg(n)}</div>`).join('');
        return `<div class="head"></div>${cells}`;
    }
}

class CadViewport extends ShadowElement {
    css() {
        return `:host { display: flex; flex-direction: column; flex: none; width: 1247px; height: 675px; margin-left: 4px; position: relative; }
                .top { flex: 1; display: flex; min-height: 0; }
                .canvas { width: 1230px; background: #000; border-top: 2px solid #a0a0a0; border-left: 2px solid #a0a0a0; box-sizing: border-box; }
                .canvas svg { display: block; }
                .vbar { flex: 1; background: #f0f0f0; position: relative; border-right: 1px solid #fff; box-sizing: border-box; border-bottom: 1px solid #999; }
                .thumb { position: absolute; left: 0; right: 1px; top: 150px; height: 17px; background: #cdcdcd; }
                .down { position: absolute; left: 4px; bottom: 4px; }
                .bottom { height: 16px; display: flex; flex: none; background: #f0f0f0; }`;
    }
    template() {
        // page coordinates, so the drawing reads against the screenshot
        return `
            <div class="top">
                <div class="canvas"><svg width="1228" height="657" viewBox="160 102 1228 657" fill="none" stroke="#fff">
                    <g shape-rendering="crispEdges">
                        <path d="M160 168.500H1388M279.500 102V759"/>
                        <rect x="272.500" y="161.500" width="14" height="14"/>
                        <path d="M177.500 691V741M177 741.500H228"/>
                        <rect x="173.500" y="736.500" width="10" height="10"/>
                    </g>
                    <path d="M160 367L304 258M422 168L455 143M466 136L518 120L523 118M494 118L535 102"/>
                    <path d="M538 102C560 130 570 145 583 168C600 195 615 220 630 245C650 285 665 318 677 352C685 370 692 388 697 402C703 420 708 437 713 455C728 510 748 600 760 759"/>
                    <path d="M520 121C535 145 545 158 552 168C560 180 565 190 570 198C585 222 595 238 603 252C615 275 625 292 633 308C640 325 647 345 653 362C659 378 665 392 670 405C675 420 680 437 683 452C700 520 722 620 735 759"/>
                    <path stroke-dasharray="2.500 2.500" d="M498 132C508 142 516 155 522 167M553 212C562 228 570 242 577 255C585 270 590 282 597 295C607 313 618 335 627 355C636 378 645 400 653 422C656 432 658 442 660 452C680 530 700 640 710 759"/>
                    <path stroke-dasharray="2.500 2.500" d="M465 145C470 151 474 157 478 163M467 132C472 127 477 125 483 123M553 285C563 302 573 318 583 335C592 355 600 375 607 395C612 412 618 435 623 453C645 540 665 650 675 759"/>
                    <rect x="455.500" y="133.500" width="10" height="10" fill="#0080ff" stroke="#555"/>
                    <rect x="483.500" y="113.500" width="10" height="10" fill="#0080ff" stroke="#555"/>
                    <path d="M670 390C682 388 688 400 677 407M692 388C704 385 711 400 700 407"/>
                    <text transform="translate(674 407) rotate(62)" font-family="Liberation Mono" font-size="12" fill="#fff" stroke="none">39616</text>
                    <text transform="translate(699 405) rotate(60)" font-family="Liberation Mono" font-size="12" fill="#fff" stroke="none">40910</text>
                    <path d="M179 674L186 681L192 674M186 681V687M232 727L245 740M245 727L232 740"/>
                    <text x="164" y="119" font-family="Liberation Sans, Noto Sans CJK SC" font-size="13" fill="#ddd" stroke="none">[−] [俯视] [二维线框]</text>
                </svg></div>
                <div class="vbar">
                    <div class="thumb"></div>
                    <svg class="down" width="9" height="7" viewBox="0 0 9 7"><path d="M1 1l3.500 3.500L8 1" stroke="#555" stroke-width="2" fill="none"/></svg>
                </div>
            </div>
            <div class="bottom"><layout-tabs></layout-tabs></div>
            <slot></slot>`;
    }
}

class LayoutTabs extends ShadowElement {
    css() {
        return `:host { display: flex; flex: 1; height: 16px; background: #f0f0f0; align-items: flex-start; font-size: 12px; color: #222; padding-left: 2px; position: relative; border-bottom: 1px solid #ddd; box-sizing: border-box; }
                .nav { display: flex; width: 58px; height: 14px; flex: none; }
                .nav div { width: 14px; height: 14px; border-right: 1px solid #bbb; display: flex; align-items: center; justify-content: center; }
                .tab { position: relative; height: 14px; line-height: 14px; text-align: center; flex: none; }
                .on { width: 43px; margin-left: 1px; background: #000; color: #fff; clip-path: polygon(0 0, 100% 0, 90% 100%, 10% 100%); }
                .off::after { content: ''; position: absolute; right: 0; top: 0; height: 14px; border-right: 1px solid #333; transform: skewX(-20deg); }
                .off::before { content: ''; position: absolute; left: 0; top: 0; height: 14px; border-right: 1px solid #333; transform: skewX(-20deg); }
                .hbar { position: absolute; left: 812px; right: 0; top: 0; height: 15px; background: #f0f0f0; border-left: 5px solid #c4c4c4; }
                .thumb { position: absolute; left: 330px; top: 0; width: 17px; height: 15px; background: #cdcdcd; }
                .arrow { position: absolute; top: 3px; }`;
    }
    template() {
        const tri = (d) => `<svg width="10" height="10" viewBox="0 0 10 10"><path d="${d}" fill="#888"/></svg>`;
        return `
            <div class="nav">
                <div>${tri('M1 0v10h2V0zM9 0L4 5l5 5z')}</div><div>${tri('M8 0L2 5l6 5z')}</div><div>${tri('M2 0l6 5-6 5z')}</div><div>${tri('M9 0v10H7V0zM1 0l5 5-5 5z')}</div>
            </div>
            <div class="tab on">模型</div>
            <div class="tab off" style="width:42px;margin-left:1px">布局1</div>
            <div class="tab off" style="width:46px;margin-left:4px">布局2</div>
            <div class="hbar">
                <svg class="arrow" style="left:4px" width="7" height="10" viewBox="0 0 7 10"><path d="M5.500 1l-4 4 4 4" stroke="#555" stroke-width="2" fill="none"/></svg>
                <div class="thumb"></div>
                <svg class="arrow" style="left:400px" width="7" height="10" viewBox="0 0 7 10"><path d="M1.500 1l4 4-4 4" stroke="#555" stroke-width="2" fill="none"/></svg>
            </div>`;
    }
}

class ViewCube extends ShadowElement {
    css() {
        return `:host { position: absolute; left: 1092px; top: 0; width: 160px; height: 190px; pointer-events: none; }
                svg { display: block; }`;
    }
    template() {
        // origin is page (1250,100)
        return `<svg width="160" height="190" viewBox="1250 100 160 190" font-family="Noto Sans CJK SC, sans-serif">
            <defs>
                <linearGradient id="steel" x1="0" y1="0" x2="1" y2="1"><stop offset="0" stop-color="#d8d8d8"/><stop offset=".5" stop-color="#6a6a6a"/><stop offset="1" stop-color="#1c1c1c"/></linearGradient>
                <linearGradient id="plate" x1="0" y1="0" x2="0" y2="1"><stop offset="0" stop-color="#e4e4e4"/><stop offset="1" stop-color="#555"/></linearGradient>
                <linearGradient id="brand" x1="1355" y1="0" x2="1402" y2="0" gradientUnits="userSpaceOnUse"><stop offset="0" stop-color="#d8d8e8"/><stop offset=".68" stop-color="#8898b8"/><stop offset=".7" stop-color="#1c2c50"/><stop offset="1" stop-color="#111"/></linearGradient>
            </defs>
            <circle cx="1312.500" cy="177" r="48.500" fill="none" stroke="#333" stroke-width="13"/>
            <rect x="1288.500" y="153.500" width="47" height="47" fill="#a8a8a8" stroke="#777"/>
            <rect x="1297" y="162" width="30" height="30" fill="#9898a2"/>
            <path d="M1250 168.500H1388" stroke="#fff" shape-rendering="crispEdges"/>
            <text x="1312" y="185" text-anchor="middle" font-size="25" fill="#666">上</text>
            <g font-size="16" fill="#8a8a8a" text-anchor="middle">
                <text x="1312" y="132">北</text><text x="1312" y="237">南</text><text x="1260" y="184">西</text><text x="1365" y="184">东</text>
            </g>
            <rect x="1288.500" y="258.500" width="47" height="16" rx="4" fill="#77777f" stroke="#555"/>
            <text x="1291" y="270" font-family="Liberation Sans" font-size="10.500" fill="#c0c0c0">WCS</text>
            <path d="M1322 264h8l-4 4z" fill="#aaa"/>
            <path d="M1353 105L1380 102L1407 107L1404 123L1400 143L1380 157L1363 145L1358 125z" fill="#1a1a1a" stroke="#444"/>
            <path d="M1356 107L1372 108L1377 120L1364 118L1360 124z" fill="url(#plate)" stroke="#111"/>
            <path d="M1404 108L1388 108L1384 120L1396 118L1401 124z" fill="url(#plate)" stroke="#111"/>
            <path d="M1373 106L1380 104L1387 106L1383 116L1377 116z" fill="#333" stroke="#888" stroke-width=".6"/>
            <path d="M1377 118h6l4 6-2 26-5 4-5-4-2-26z" fill="url(#steel)" stroke="#111"/>
            <path d="M1361 127L1373 131L1374 137L1364 134zM1399 127L1387 131L1386 137L1396 134z" fill="#000" stroke="#888" stroke-width=".5"/>
            <path d="M1364 136L1374 139L1375 152L1368 147zM1396 136L1386 139L1385 152L1392 147z" fill="#555" stroke="#222" stroke-width=".5"/>
            <text x="1356" y="186" font-size="22" fill="url(#brand)">新思</text>
        </svg>`;
    }
}

class PropPalette extends ShadowElement {
    css() {
        return `:host { position: absolute; left: 146px; top: 71px; width: 248px; height: 451px; box-sizing: border-box; display: flex; background: #c8c8c8; border: 1px solid #6e6e6e; }
                .strip { width: 23px; flex: none; position: relative; }
                .strip svg { position: absolute; display: block; }
                .title { position: absolute; left: 4px; bottom: 27px; writing-mode: vertical-rl; font-size: 12px; color: #222; transform: rotate(180deg); -webkit-text-stroke: .3px #222; }
                .panel { flex: 1; background: #f0f0f0; border: 1px solid #888; border-radius: 4px 4px 3px 3px; margin: 0 1px 2px 0; padding: 13px 15px 0 20px; box-sizing: border-box; }
                .tools { display: flex; align-items: center; height: 25px; margin-bottom: 5px; padding-left: 2px; }
                cad-combo { width: 106px; height: 23px; border: 1px solid #bbb; box-sizing: border-box; border-radius: 2px; font-size: 12px; padding-left: 3px; }
                .btns { display: flex; margin-left: 4px; border: 1px solid #888; height: 25px; box-sizing: border-box; width: 76px; }
                .btns div { flex: 1; display: flex; align-items: center; justify-content: center; border-right: 1px solid #888; }
                .btns div:last-child { border: none; }`;
    }
    template() {
        return `
            <div class="strip">
                <svg style="left:8px;top:3px" width="12" height="12" viewBox="0 0 12 12"><path d="M1 1l10 10M11 1L1 11" stroke="#111" stroke-width="2.2"/></svg>
                <svg style="left:4px;top:21px" width="14" height="12" viewBox="0 0 14 12"><path d="M1 1v10" stroke="#111" stroke-width="1.5"/><path d="M7 2L3 6l4 4zM9 2l4 4-4 4z" fill="#111"/></svg>
                <svg style="left:6px;top:40px" width="14" height="12" viewBox="0 0 14 12"><rect x="1" y="1" width="12" height="10" fill="#fff" stroke="#111"/><rect x="1" y="1" width="12" height="3" fill="#111"/><path d="M6 4v7M6 7.500h7" stroke="#111"/></svg>
                <div class="title">特性</div>
                <svg style="left:3px;bottom:1px" width="15" height="16" viewBox="0 0 16 16"><rect x="1.5" y=".5" width="13" height="15" fill="#fff" stroke="#222"/><rect x="3.5" y="2.5" width="6" height="6" fill="#1f5a9a"/><rect x="11" y="2.5" width="2" height="6" fill="#aaa"/><path d="M4 12h8M4 12l2-1.500M4 12l2 1.500" stroke="#222" fill="none" stroke-width=".8"/></svg>
            </div>
            <div class="panel">
                <div class="tools">
                    <cad-combo>面域</cad-combo>
                    <div class="btns">
                        <div><svg width="16" height="16" viewBox="0 0 16 16"><rect x="1.5" y="1.5" width="13" height="13" fill="none" stroke="#333" stroke-dasharray="1 2"/><rect x="4.500" y="4.500" width="7" height="7" fill="none" stroke="#555" stroke-dasharray="1 1"/><path d="M8 4.500v7M4.500 8h7" stroke="#0a9a0a" stroke-width="2.2"/></svg></div>
                        <div><svg width="18" height="16" viewBox="0 0 18 16"><path d="M2 8a4 4 0 0 1 3-4" stroke="#555" fill="none"/><rect x="5" y="1" width="6" height="7" fill="#bcd8a8" stroke="#2a6a2a"/><path d="M9 5v9l2-2 3 3 1-1-3-3 3-1z" fill="#fff" stroke="#222"/></svg></div>
                        <div><svg width="18" height="16" viewBox="0 0 18 16"><rect x="1.5" y="2.5" width="8" height="11" fill="#a8d090" stroke="#2a6a2a" stroke-width="1.5"/><path d="M8 5v9l2-2 2 3 1-1-2-3 3-1z" fill="#fff" stroke="#222"/><path d="M15 1l-3 4h2l-2 3 4-4h-2l2-3z" fill="#f09a20" stroke="#a05a10" stroke-width=".4"/></svg></div>
                    </div>
                </div>
                <slot></slot>
            </div>`;
    }
}

class PropSection extends ShadowElement {
    css() {
        return `:host { display: block; margin-bottom: 3px; width: 186px; }
                .head { display: flex; align-items: center; justify-content: space-between; height: 22px; box-sizing: border-box; padding: 0 10px 2px 4px; background: linear-gradient(#adadad, #8c8c8c); border: 1px solid #808080; font-weight: bold; font-size: 12.5px; color: #111; }
                .head i { width: 0; height: 0; border: 5px solid transparent; border-top: none; border-bottom: 5px solid #111; margin-top: 2px; }
                .rows { margin-left: 17px; border-left: 1px solid #888; border-right: 1px solid #888; }`;
    }
    template() {
        return `<div class="head"><span>${this.getAttribute('title')}</span><i></i></div><div class="rows"><slot></slot></div>`;
    }
}

class PropRow extends ShadowElement {
    css() {
        const bg = this.hasAttribute('readonly') ? '#f0f0f0' : '#fff';
        return `:host { display: flex; height: 21px; box-sizing: border-box; border-bottom: 1px solid #888; font-size: 12px; }
                .k { width: 74px; flex: none; padding-left: 4px; box-sizing: border-box; line-height: 21px; background: #f0f0f0; border-right: 1px solid #888; color: #222; }
                .v { flex: 1; padding-left: 2px; line-height: 20px; background: ${bg}; white-space: nowrap; overflow: hidden; color: #222; }`;
    }
    template() {
        return `<div class="k">${this.getAttribute('label')}</div><div class="v"><slot></slot></div>`;
    }
}

customElements.define('cad-icon', CadIcon);
customElements.define('cad-sep', CadSep);
customElements.define('cad-grip', CadGrip);
customElements.define('cad-combo', CadCombo);
customElements.define('cad-toolbar', CadToolbar);
customElements.define('cad-toolrow', CadToolrow);
customElements.define('cad-titlebar', CadTitlebar);
customElements.define('cad-menubar', CadMenubar);
customElements.define('cad-main', CadMain);
customElements.define('t20-panel', T20Panel);
customElements.define('t20-group', T20Group);
customElements.define('t20-item', T20Item);
customElements.define('draw-toolbar', DrawToolbar);
customElements.define('cad-viewport', CadViewport);
customElements.define('layout-tabs', LayoutTabs);
customElements.define('view-cube', ViewCube);
customElements.define('prop-palette', PropPalette);
customElements.define('prop-section', PropSection);
customElements.define('prop-row', PropRow);
</script>
</body>
</html>
